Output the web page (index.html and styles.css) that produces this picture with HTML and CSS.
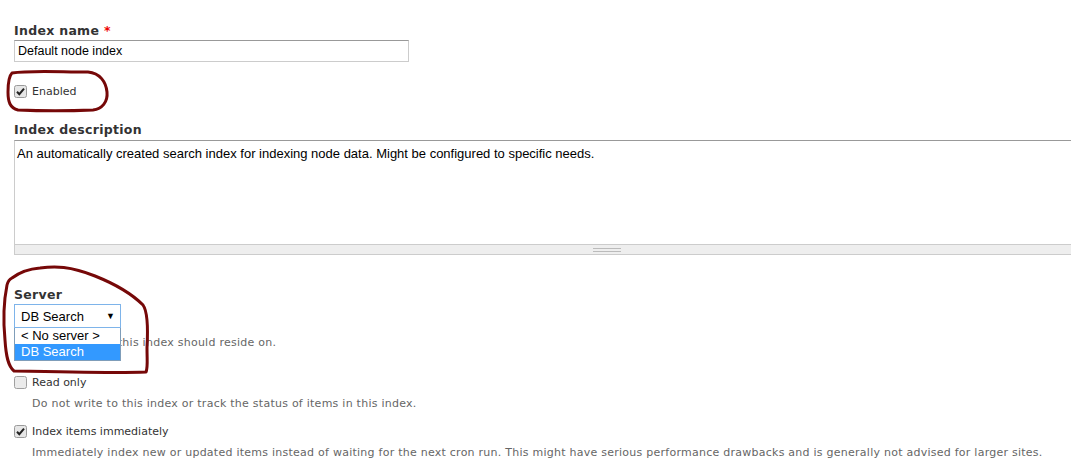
FILE: index.html
```html
<!DOCTYPE html>
<html>
<head>
<meta charset="utf-8">
<link rel="stylesheet" href="styles.css">
</head>
<body>
<div class="page">
  <div class="field field-name">
    <label class="label">Index name <span class="req">*</span></label>
    <div class="text-input">Default node index</div>
  </div>

  <div class="check-row row-enabled">
    <svg class="cb" width="13" height="13" viewBox="0 0 13 13"><rect x="0.5" y="0.5" width="12" height="12" rx="2" fill="#e6e6e6" stroke="#9a9a9a"/><path d="M3 6.8 L5.3 9.2 L10 3.6" fill="none" stroke="#222" stroke-width="2"/></svg>
    <span class="check-label">Enabled</span>
  </div>

  <div class="field field-desc">
    <label class="label">Index description</label>
    <div class="textarea">
      <div class="textarea-body">An automatically created search index for indexing node data. Might be configured to specific needs.</div>
      <div class="grip"><span class="grip-lines"></span></div>
    </div>
  </div>

  <div class="field field-server">
    <label class="label">Server</label>
    <div class="select-wrap">
      <div class="select"><span>DB Search</span><span class="arrow">&#9660;</span></div>
      <div class="options">
        <div class="option">&lt; No server &gt;</div>
        <div class="option selected">DB Search</div>
      </div>
    </div>
    <div class="desc desc-server">Select the server this index should reside on.</div>
  </div>

  <div class="check-row row-readonly">
    <svg class="cb" width="13" height="13" viewBox="0 0 13 13"><rect x="0.5" y="0.5" width="12" height="12" rx="2" fill="#ebebeb" stroke="#a0a0a0"/></svg>
    <span class="check-label">Read only</span>
  </div>
  <div class="desc desc-check">Do not write to this index or track the status of items in this index.</div>

  <div class="check-row row-immediate">
    <svg class="cb" width="13" height="13" viewBox="0 0 13 13"><rect x="0.5" y="0.5" width="12" height="12" rx="2" fill="#e6e6e6" stroke="#9a9a9a"/><path d="M3 6.8 L5.3 9.2 L10 3.6" fill="none" stroke="#222" stroke-width="2"/></svg>
    <span class="check-label">Index items immediately</span>
  </div>
  <div class="desc desc-check">Immediately index new or updated items instead of waiting for the next cron run. This might have serious performance drawbacks and is generally not advised for larger sites.</div>

  <svg class="annot" width="1071" height="475" viewBox="0 0 1071 475">
    <path d="M12 73 C 30 70, 60 72, 88 72 C 100 73, 106 82, 107 92 C 108 102, 102 109, 93 110 C 70 111, 40 111, 18 110 C 10 108, 8 102, 8 92 C 8 84, 9 76, 12 73 Z" fill="none" stroke="#760808" stroke-width="3" stroke-linejoin="round"/>
    <path d="M12 278 C 20 272, 28 269, 40 268 C 55 266, 70 266, 95 276 C 115 284, 130 292, 143 305 C 148 312, 148 330, 147 348 C 147 360, 148 368, 146 372 C 120 373, 60 372, 14 371 C 8 366, 6 356, 5 340 C 3 320, 4 300, 7 285 C 8 281, 10 279, 12 278 Z" fill="none" stroke="#760808" stroke-width="3" stroke-linejoin="round"/>
  </svg>
</div>
</body>
</html>
```

FILE: styles.css
```css
html, body {
  margin: 0;
  padding: 0;
  background: #fff;
  overflow: hidden;
}

.page {
  position: relative;
  width: 1071px;
  height: 475px;
  padding: 22px 0 0 14px;
  box-sizing: border-box;
  font-family: "DejaVu Sans", Verdana, sans-serif;
  color: #333;
}

.label {
  display: block;
  font-size: 12.5px;
  font-weight: bold;
  line-height: 17px;
  color: #333;
  letter-spacing: 0.3px;
}

.req {
  color: #e00;
}

.field-name .text-input {
  margin-top: 1px;
  width: 395px;
  height: 22px;
  box-sizing: border-box;
  border: 1px solid #ccc;
  border-top-color: #999;
  padding: 0 3px;
  font-family: "Liberation Sans", Arial, sans-serif;
  font-size: 12.5px;
  line-height: 20px;
  color: #000;
}

.check-row {
  display: flex;
  align-items: center;
  gap: 5px;
  height: 16px;
  font-size: 11px;
  color: #333;
}

.cb {
  flex: none;
}

.row-enabled {
  margin-top: 21px;
}

.field-desc {
  margin-top: 22px;
}

.textarea {
  margin-top: 2px;
  width: 1080px;
  border: 1px solid #ccc;
  border-top-color: #999;
  box-sizing: border-box;
}

.textarea-body {
  height: 103px;
  padding: 5px 2px 0;
  box-sizing: border-box;
  font-family: "Liberation Sans", Arial, sans-serif;
  font-size: 13px;
  color: #000;
}

.grip {
  height: 9px;
  background: #eee;
  border-top: 1px solid #ccc;
  display: flex;
  justify-content: flex-start;
  padding-left: 578px;
  align-items: center;
}

.grip-lines {
  display: block;
  width: 28px;
  height: 4px;
  border-top: 1px solid #bbb;
  border-bottom: 1px solid #bbb;
  box-sizing: border-box;
}

.field-server {
  position: relative;
  margin-top: 31px;
}

.select-wrap {
  position: relative;
  margin-top: 1px;
  width: 107px;
}

.select {
  height: 24px;
  box-sizing: border-box;
  border: 1px solid #7eb4ea;
  display: flex;
  align-items: center;
  justify-content: space-between;
  padding: 0 5px 0 6px;
  font-family: "Liberation Sans", Arial, sans-serif;
  font-size: 13px;
  color: #000;
}

.arrow {
  font-size: 9px;
}

.options {
  position: absolute;
  left: 0;
  top: 24px;
  width: 107px;
  box-sizing: border-box;
  border: 1px solid #7f9db9;
  border-top: none;
  background: #fff;
  z-index: 2;
  font-family: "Liberation Sans", Arial, sans-serif;
  font-size: 13px;
  color: #000;
}

.option {
  height: 16px;
  line-height: 16px;
  padding-left: 6px;
}

.option.selected {
  background: #3399ff;
  color: #fff;
}

.desc {
  font-size: 11px;
  color: #666;
  letter-spacing: 0.25px;
}

.desc-server {
  margin-top: 8px;
  padding-left: 2px;
  line-height: 14px;
}

.row-readonly {
  margin-top: 24px;
}

.desc-check {
  padding-left: 18px;
  margin-top: 6px;
  line-height: 15px;
}

.row-immediate {
  margin-top: 12px;
}

.annot {
  position: absolute;
  left: 0;
  top: 0;
  pointer-events: none;
  z-index: 3;
}
```
